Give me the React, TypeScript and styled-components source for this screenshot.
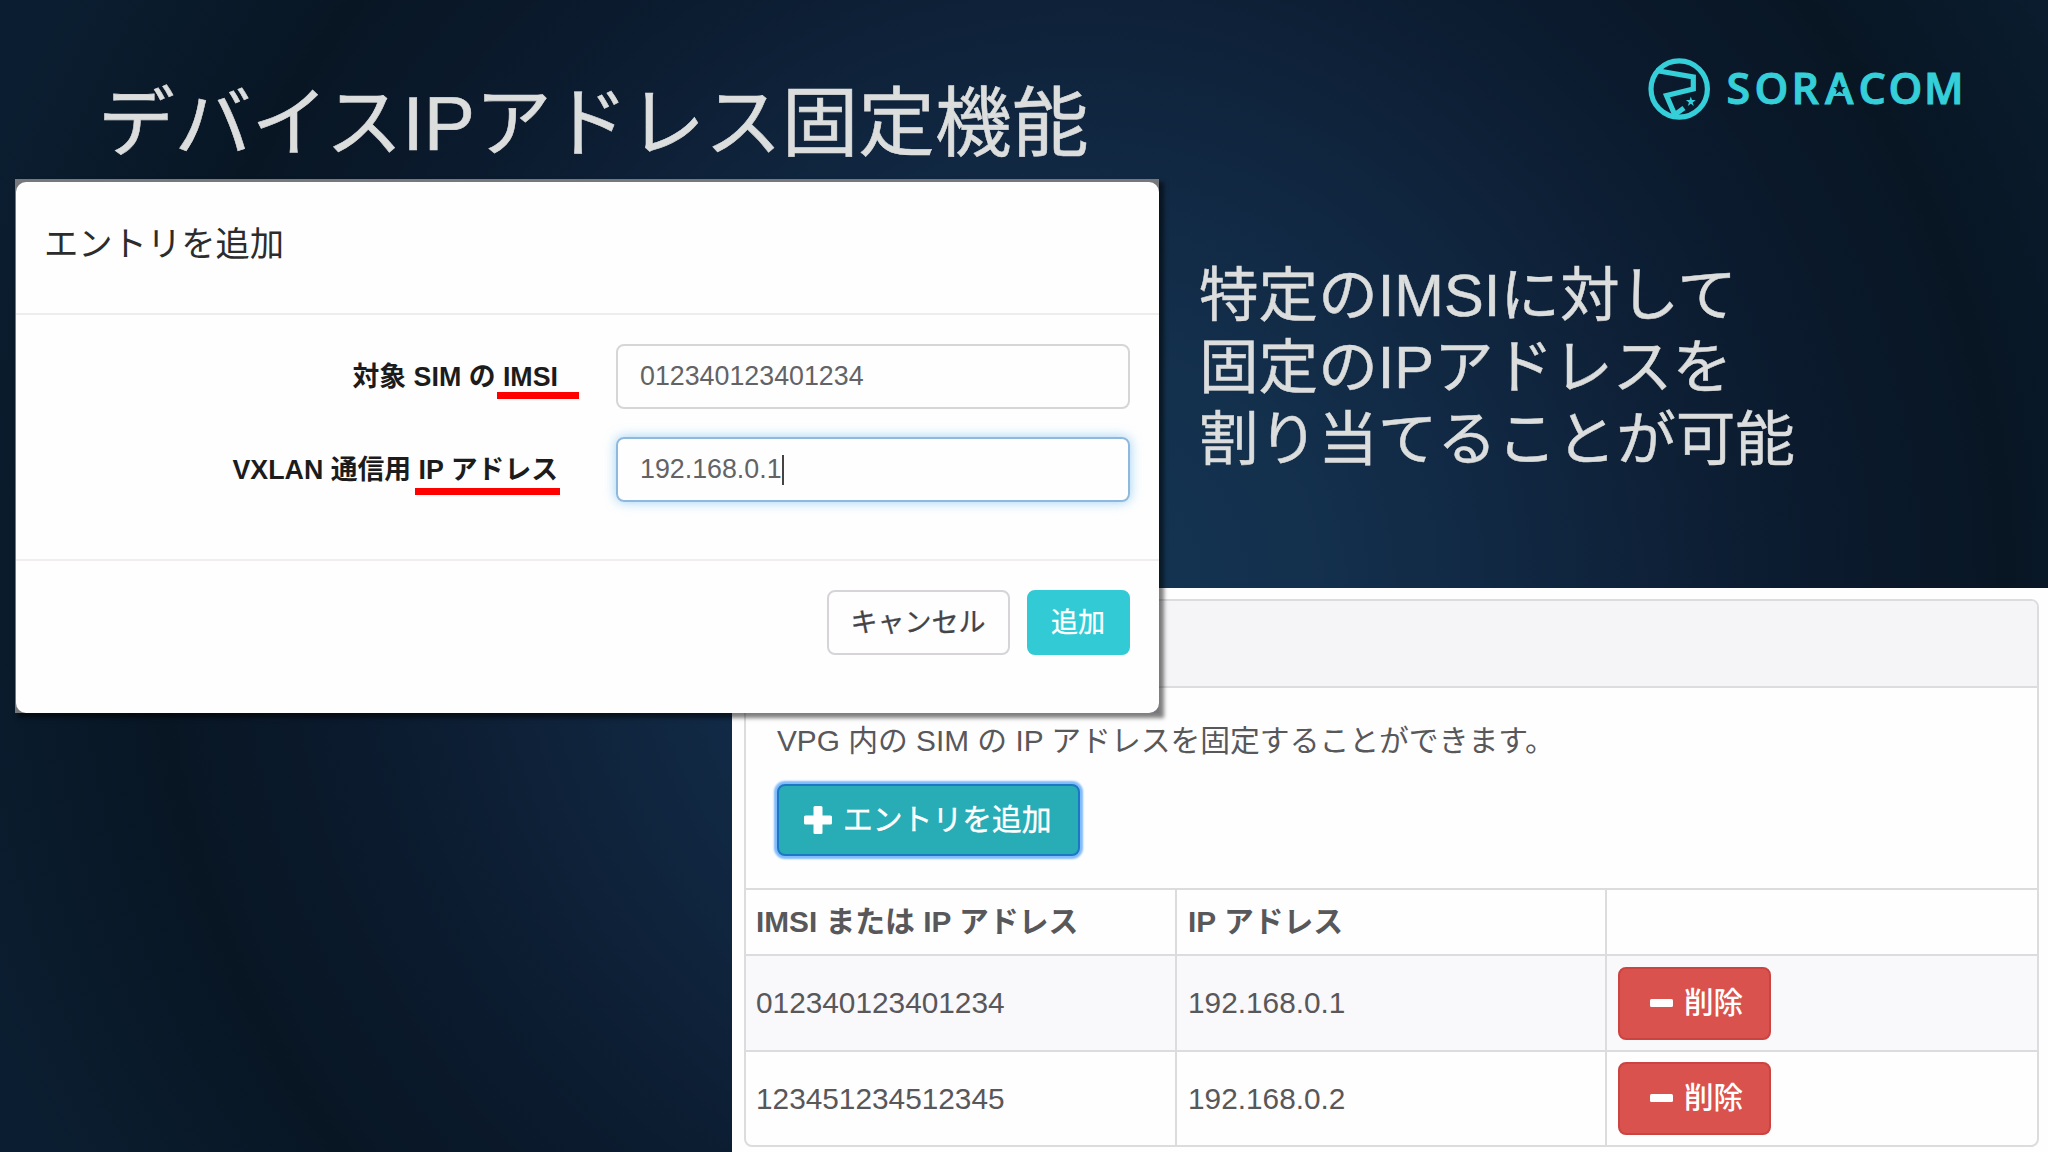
import React from "react";
import styled, { createGlobalStyle } from "styled-components";

const sans = `"Liberation Sans", "Noto Sans CJK JP", sans-serif`;

const GlobalStyle = createGlobalStyle`
  * { box-sizing: border-box; }
  body { margin: 0; font-family: ${sans}; }
`;

const Slide = styled.main`
  position: relative;
  display: grid;
  grid-template-rows: 180px 408px 1fr;
  width: 2048px;
  height: 1152px;
  overflow: hidden;
  background: radial-gradient(
    ellipse 925px 940px at 1080px 585px,
    #143552 0%,
    #13304d 25%,
    #112843 45%,
    #0e2138 62%,
    #0b1a2d 80%,
    #081624 100%,
    #0b1e31 128%
  );
`;

const Header = styled.header`
  display: flex;
  justify-content: space-between;
  align-items: flex-start;
  padding: 52px 80px 0 98px;
`;

const Title = styled.h1`
  margin: 27px 0 0;
  font-size: 76.7px;
  line-height: 90px;
  font-weight: 400;
  color: #dcdddd;
  -webkit-text-stroke: 0.6px #dcdddd;
  white-space: nowrap;
`;

const LogoSvg = styled.svg`
  display: block;
  width: 323px;
  height: 74px;
  font-family: "Open Sans", "Noto Sans", sans-serif;
  font-weight: 600;
  font-size: 43px;
`;

const Message = styled.p`
  margin: 80px 0 0 1199px;
  font-size: 59.6px;
  line-height: 72px;
  color: #dcdddd;
  -webkit-text-stroke: 0.5px #dcdddd;
  white-space: nowrap;
`;

const Sheet = styled.section`
  margin-left: 732px;
  padding: 11px 9px 5px 12px;
  background: #fefefe;
`;

const Panel = styled.div`
  display: flex;
  flex-direction: column;
  height: 548px;
  border: 2px solid #dcdbde;
  border-radius: 8px;
  overflow: hidden;
  color: #58575a;
  font-size: 29.8px;
`;

const PanelHeading = styled.div`
  flex: none;
  height: 87px;
  background: #f5f4f6;
  border-bottom: 2px solid #dcdbde;
`;

const PanelBody = styled.div`
  flex: none;
  display: flex;
  flex-direction: column;
  align-items: flex-start;
  height: 200px;
  padding: 33px 31px 0;
`;

const Description = styled.p`
  margin: 0 0 23px;
  line-height: 40px;
  white-space: nowrap;
`;

const AddEntryButton = styled.button`
  display: flex;
  align-items: center;
  gap: 11px;
  width: 303px;
  height: 72px;
  padding: 0 0 1px 25px;
  border: 2px solid #1c78c4;
  border-radius: 8px;
  background: #28acb5;
  box-shadow: 0 0 2px 3px #80bbfb;
  color: #fff;
  font: 400 29.8px/40px ${sans};
  -webkit-text-stroke: 0.4px #fff;
  white-space: nowrap;
`;

const Table = styled.div`
  flex: 1;
  display: grid;
  grid-template-rows: 66px 96px 1fr;
`;

const Row = styled.div<{ $striped?: boolean; $head?: boolean }>`
  display: grid;
  grid-template-columns: 429px 430px 1fr;
  border-top: 2px solid #dcdbde;
  background: ${(p) => (p.$striped ? "#f9f8fa" : "transparent")};
  font-weight: ${(p) => (p.$head ? 700 : 400)};
`;

const Cell = styled.div`
  display: flex;
  align-items: center;
  padding: 0 10px;
  line-height: 40px;
  white-space: nowrap;
  & + & {
    padding-left: 11px;
    border-left: 2px solid #dcdbde;
  }
`;

const DeleteButton = styled.button`
  display: flex;
  align-items: center;
  gap: 11px;
  width: 153px;
  height: 73px;
  padding: 0 0 1px 30px;
  border: 2px solid #cc4442;
  border-radius: 8px;
  background: #d9524e;
  color: #fff;
  font: 500 29.6px/40px ${sans};
`;

const Dialog = styled.section`
  position: absolute;
  left: 15px;
  top: 179px;
  width: 1144px;
  height: 534px;
  padding: 3px 0 0 1px;
  background: #77787b;
  box-shadow: 4px 4px 4px 1px rgba(0, 0, 0, 0.5);
`;

const DialogSurface = styled.div`
  display: flex;
  flex-direction: column;
  height: 100%;
  border-radius: 10px;
  background: #fefefe;
`;

const DialogHeader = styled.h2`
  flex: none;
  height: 133px;
  margin: 0;
  padding: 40px 28px 0;
  border-bottom: 2px solid #ededed;
  font-size: 34.3px;
  line-height: 44px;
  font-weight: 400;
  color: #2c2c2c;
`;

const DialogForm = styled.div`
  flex: none;
  display: flex;
  flex-direction: column;
  gap: 28px;
  height: 246px;
  padding: 29px 29px 0 0;
  border-bottom: 2px solid #f1eced;
`;

const Field = styled.label`
  display: grid;
  grid-template-columns: 542px 514px;
  justify-content: end;
  column-gap: 58px;
  align-items: center;
`;

const FieldLabel = styled.span`
  text-align: right;
  font-size: 26.8px;
  line-height: 36px;
  font-weight: 700;
  color: #1c1c1c;
  white-space: nowrap;
`;

const Marked = styled.span<{ $from: number; $to: number; $drop: number }>`
  position: relative;
  &::after {
    content: "";
    position: absolute;
    left: ${(p) => p.$from}px;
    right: ${(p) => p.$to}px;
    bottom: -${(p) => p.$drop}px;
    height: 7px;
    background: #fe0000;
  }
`;

const Input = styled.div<{ $focused?: boolean }>`
  display: flex;
  align-items: center;
  height: 65px;
  padding: 0 22px;
  border: 2px solid ${(p) => (p.$focused ? "#8fb9dc" : "#d6d6d9")};
  border-radius: 8px;
  box-shadow: ${(p) => (p.$focused ? "0 0 12px rgba(102, 185, 240, 0.65)" : "none")};
  font-size: 26.8px;
  color: #636366;
`;

const Caret = styled.span`
  width: 2px;
  height: 30px;
  background: #444;
`;

const DialogFooter = styled.div`
  display: flex;
  justify-content: flex-end;
  gap: 17px;
  padding: 29px 29px 0 0;
`;

const DialogButton = styled.button<{ $primary?: boolean }>`
  width: ${(p) => (p.$primary ? 103 : 183)}px;
  height: 65px;
  padding: 0 1px 0 0;
  border: 2px solid ${(p) => (p.$primary ? "#31cad5" : "#d6d4d9")};
  border-radius: 8px;
  background: ${(p) => (p.$primary ? "#31cad5" : "#fefefe")};
  color: ${(p) => (p.$primary ? "#fff" : "#444347")};
  font: 400 27px/36px ${sans};
  -webkit-text-stroke: 0.3px currentColor;
`;

const Logo = () => (
  <LogoSvg viewBox="1645 52 323 74" aria-label="SORACOM">
    <g fill="none" stroke="#35cfd9" strokeWidth="5.2">
      <circle cx="1679.2" cy="89" r="28.2" />
      <path d="M1656 70.5 L1693.3 77 V89 L1666.5 95.5 L1674 113 M1673 116 L1684 108" />
    </g>
    <path
      fill="#35cfd9"
      d="M1690.8 96.6l1.2 3.5h3.7l-3 2.3 1.1 3.5-3-2.1-3 2.1 1.1-3.5-3-2.3h3.7z"
    />
    <text
      x="1726.5 1754.5 1791.5 1825 1858.5 1888.5 1924"
      y="104"
      fill="#35cfd9"
      stroke="#35cfd9"
      strokeWidth="1"
    >
      SORACOM
    </text>
    <path
      fill="#081827"
      d="M1839.5 82.5l1.5 4.5h4.7l-3.8 2.8 1.5 4.5-3.9-2.8-3.9 2.8 1.5-4.5-3.8-2.8h4.7z"
    />
  </LogoSvg>
);

const PlusIcon = () => (
  <svg width="28" height="28" viewBox="0 0 28 28" fill="#fff">
    <rect x="0" y="9.6" width="28" height="9" rx="1.5" />
    <rect x="9.5" y="0" width="9" height="28" rx="1.5" />
  </svg>
);

const MinusIcon = () => (
  <svg width="23" height="8" viewBox="0 0 23 8" fill="#fff">
    <rect width="23" height="8" rx="1.5" />
  </svg>
);

const entries = [
  { imsi: "012340123401234", ip: "192.168.0.1" },
  { imsi: "123451234512345", ip: "192.168.0.2" },
];

export default function App() {
  return (
    <>
      <GlobalStyle />
      <Slide>
        <Header>
          <Title>デバイスIPアドレス固定機能</Title>
          <Logo />
        </Header>
        <Message>
          特定のIMSIに対して
          <br />
          固定のIPアドレスを
          <br />
          割り当てることが可能
        </Message>
        <Sheet>
          <Panel>
            <PanelHeading />
            <PanelBody>
              <Description>VPG 内の SIM の IP アドレスを固定することができます。</Description>
              <AddEntryButton>
                <PlusIcon />
                エントリを追加
              </AddEntryButton>
            </PanelBody>
            <Table>
              <Row $head>
                <Cell>IMSI または IP アドレス</Cell>
                <Cell>IP アドレス</Cell>
                <Cell />
              </Row>
              {entries.map((entry, i) => (
                <Row key={entry.imsi} $striped={i % 2 === 0}>
                  <Cell>{entry.imsi}</Cell>
                  <Cell>{entry.ip}</Cell>
                  <Cell>
                    <DeleteButton>
                      <MinusIcon />
                      削除
                    </DeleteButton>
                  </Cell>
                </Row>
              ))}
            </Table>
          </Panel>
        </Sheet>
        <Dialog>
          <DialogSurface>
            <DialogHeader>エントリを追加</DialogHeader>
            <DialogForm>
              <Field>
                <FieldLabel>
                  対象 SIM の <Marked $from={-6} $to={-21} $drop={7}>IMSI</Marked>
                </FieldLabel>
                <Input>012340123401234</Input>
              </Field>
              <Field>
                <FieldLabel>
                  VXLAN 通信用 <Marked $from={-4} $to={-2} $drop={10}>IP アドレス</Marked>
                </FieldLabel>
                <Input $focused>
                  192.168.0.1
                  <Caret />
                </Input>
              </Field>
            </DialogForm>
            <DialogFooter>
              <DialogButton>キャンセル</DialogButton>
              <DialogButton $primary>追加</DialogButton>
            </DialogFooter>
          </DialogSurface>
        </Dialog>
      </Slide>
    </>
  );
}
